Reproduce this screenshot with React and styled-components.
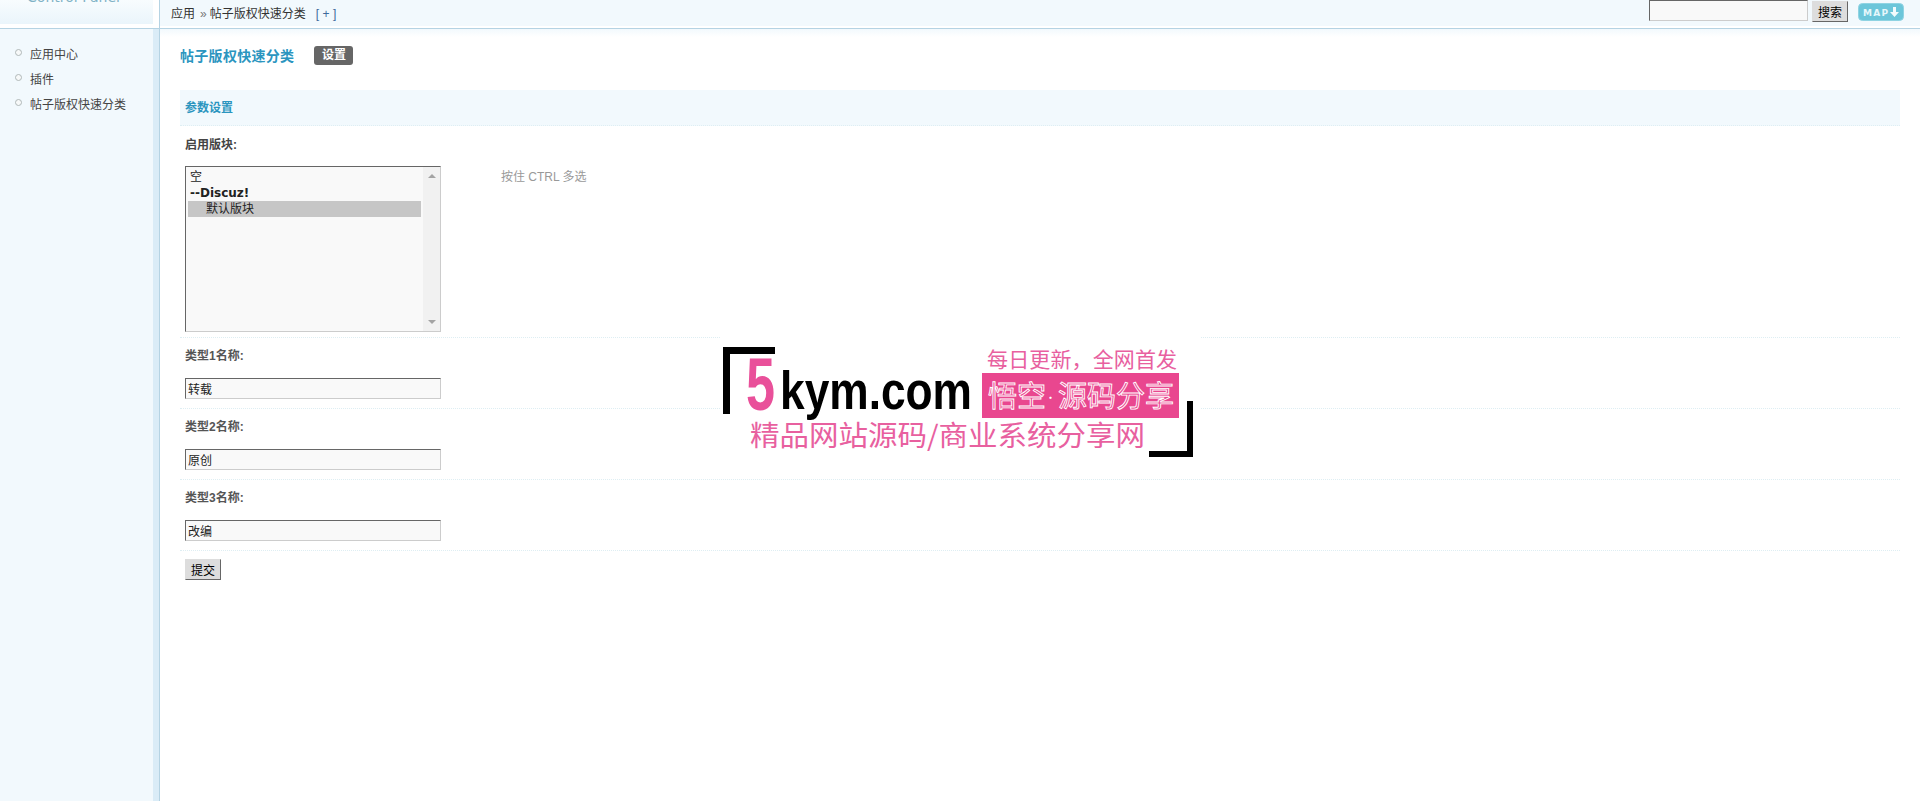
import React from "react";
import styled, { createGlobalStyle } from "styled-components";

const GlobalStyle = createGlobalStyle`
  html, body {
    margin: 0;
    padding: 0;
    background: #fff;
  }
  body {
    font: 12px/18px "Liberation Sans", "Noto Sans CJK SC", sans-serif;
    color: #333;
  }
`;

const menuItems = ["应用中心", "插件", "帖子版权快速分类"];

const fields = [
  { label: "类型1名称:", value: "转载" },
  { label: "类型2名称:", value: "原创" },
  { label: "类型3名称:", value: "改编" },
];

const MapIcon = () => (
  <svg width="46" height="18" viewBox="0 0 46 18">
    <rect x="0.5" y="0.5" width="45" height="17" rx="4" fill="#6cc6da" stroke="#8fd3e2" />
    <text
      x="5"
      y="13"
      fontFamily="'DejaVu Sans', sans-serif"
      fontWeight="700"
      fontSize="9"
      textLength="25"
      fill="#e6f7fb"
    >
      MAP
    </text>
    <path d="M35 4h3v5h3l-4.500 5-4.500-5h3z" fill="#f2fbfd" />
  </svg>
);

const Watermark = () => (
  <svg width="480" height="125" viewBox="0 0 480 125">
    <path d="M3 12h52v7H10v60H3z" fill="#000" />
    <path d="M473 66v56h-44v-6h38V66z" fill="#000" />
    <text
      x="26"
      y="75"
      fontFamily="'Liberation Sans', sans-serif"
      fontWeight="700"
      fontSize="75"
      textLength="29"
      lengthAdjust="spacingAndGlyphs"
      fill="#e9509a"
    >
      5
    </text>
    <text
      x="60"
      y="74"
      fontFamily="'Liberation Sans', sans-serif"
      fontWeight="700"
      fontSize="54"
      textLength="192"
      lengthAdjust="spacingAndGlyphs"
      fill="#000"
    >
      kym.com
    </text>
    <text
      x="267"
      y="32"
      fontFamily="'Noto Sans CJK SC', sans-serif"
      fontSize="21"
      textLength="190"
      fill="#e8609f"
    >
      每日更新，全网首发
    </text>
    <rect x="262" y="38" width="197" height="45" fill="#e9478f" />
    <text
      x="268"
      y="72"
      fontFamily="'Noto Sans CJK SC', sans-serif"
      fontSize="29"
      fill="#e9478f"
      stroke="#fff"
      strokeWidth="0.9"
    >
      悟空
    </text>
    <text
      x="326"
      y="66"
      fontFamily="'Noto Sans CJK SC', sans-serif"
      fontSize="9"
      fontWeight="700"
      fill="#fff"
    >
      ·
    </text>
    <text
      x="338"
      y="72"
      fontFamily="'Noto Sans CJK SC', sans-serif"
      fontSize="29"
      fill="#e9478f"
      stroke="#fff"
      strokeWidth="0.9"
    >
      源码分享
    </text>
    <text
      x="30"
      y="111"
      fontFamily="'Noto Sans CJK SC', sans-serif"
      fontSize="28"
      textLength="395"
      lengthAdjust="spacingAndGlyphs"
      fill="#e8609f"
    >
      精品网站源码/商业系统分享网
    </text>
  </svg>
);

const App = () => {
  return (
    <Page>
      <GlobalStyle />
      <Header>
        <LogoBox>
          <LogoText>Control Panel</LogoText>
        </LogoBox>
        <HeaderGap />
        <HeaderBar>
          <Crumbs>
            应用<CrumbSep>»</CrumbSep>帖子版权快速分类<AddLink>[+]</AddLink>
          </Crumbs>
          <SearchArea>
            <Field $width="159px" $height="21px" />
            <PlainButton>搜索</PlainButton>
            <MapLink>
              <MapIcon />
            </MapLink>
          </SearchArea>
        </HeaderBar>
      </Header>

      <Body>
        <Sidebar>
          <Menu>
            {menuItems.map((item) => (
              <MenuItem key={item}>{item}</MenuItem>
            ))}
          </Menu>
        </Sidebar>
        <SideStrip />
        <Main>
          <TitleRow>
            <Title>帖子版权快速分类</Title>
            <Tab>设置</Tab>
          </TitleRow>

          <SectionHead>参数设置</SectionHead>

          <LabelRow>启用版块:</LabelRow>
          <SelectRow>
            <ListBox>
              <ListItems>
                <ListItem>空</ListItem>
                <ListItem $bold>--Discuz!</ListItem>
                <ListItem $selected>默认版块</ListItem>
              </ListItems>
              <ScrollTrack>
                <ArrowUp />
                <ArrowDown />
              </ScrollTrack>
            </ListBox>
            <Hint>按住 CTRL 多选</Hint>
          </SelectRow>

          {fields.map((field) => (
            <FieldRow key={field.label}>
              <FieldLabel>{field.label}</FieldLabel>
              <Field $width="256px" $height="21px" defaultValue={field.value} />
            </FieldRow>
          ))}

          <SubmitRow>
            <PlainButton>提交</PlainButton>
          </SubmitRow>
        </Main>
      </Body>

      <WatermarkBox>
        <Watermark />
      </WatermarkBox>
    </Page>
  );
};

const Page = styled.div`
  position: relative;
  display: flex;
  flex-direction: column;
  height: 801px;
  overflow: hidden;
`;

const Header = styled.div`
  display: flex;
  height: 28px;
  flex: none;
  border-bottom: 1px solid #b5d3e3;
  background: #fff;
`;

const LogoBox = styled.div`
  width: 153px;
  height: 24px;
  overflow: hidden;
  background: linear-gradient(#f8fcfe, #eaf5fb);
  text-align: center;
`;

const LogoText = styled.div`
  margin-top: -12px;
  padding-right: 6px;
  font: 14px/18px "DejaVu Sans", sans-serif;
  color: #7fb2c6;
`;

const HeaderGap = styled.div`
  width: 7px;
  flex: none;
  border-right: 1px solid #b5d3e3;
  box-sizing: border-box;
`;

const HeaderBar = styled.div`
  flex: 1;
  display: flex;
  align-items: flex-start;
  justify-content: space-between;
  height: 26px;
  padding-left: 11px;
  padding-right: 16px;
  background: #f2f9fd;
`;

const Crumbs = styled.div`
  line-height: 28px;
  color: #333;
`;

const CrumbSep = styled.span`
  margin: 0 3px 0 5px;
  color: #777;
`;

const AddLink = styled.span`
  margin-left: 10px;
  color: #3d6a9c;
  letter-spacing: 3.5px;
`;

const SearchArea = styled.div`
  display: flex;
  align-items: flex-start;
`;

const MapLink = styled.a`
  display: block;
  margin: 3px 0 0 10px;
  height: 18px;
`;

const Field = styled.input`
  display: block;
  box-sizing: border-box;
  width: ${(props) => props.$width};
  height: ${(props) => props.$height};
  padding: 0 2px;
  border: 1px solid;
  border-color: #666 #ccc #ccc #666;
  background: #f9f9f9;
  font: 12px "Noto Sans CJK SC", sans-serif;
  color: #222;
  outline: none;
`;

const PlainButton = styled.button`
  display: block;
  box-sizing: border-box;
  width: 36px;
  height: 21px;
  margin: 1px 0 0 4px;
  padding: 0;
  border: 1px solid;
  border-color: #ddd #666 #666 #ddd;
  background: #ddd;
  font: 12px/19px "Noto Sans CJK SC", sans-serif;
  color: #000;
`;

const Body = styled.div`
  flex: 1;
  display: flex;
  min-height: 0;
`;

const Sidebar = styled.div`
  width: 153px;
  flex: none;
  background: #f2f9fd;
`;

const Menu = styled.ul`
  list-style: none;
  margin: 0;
  padding: 14px 0 0;
`;

const MenuItem = styled.li`
  position: relative;
  height: 25px;
  padding-left: 30px;
  line-height: 24px;
  color: #444;

  &::before {
    content: "";
    position: absolute;
    left: 15px;
    top: 6px;
    width: 5px;
    height: 5px;
    border: 1px solid #b0b8b8;
    border-radius: 50%;
    background: #f7f9f9;
  }
`;

const SideStrip = styled.div`
  width: 6px;
  flex: none;
  background: #daecf7;
  border-right: 1px solid #b5d3e3;
`;

const Main = styled.div`
  flex: 1;
  min-width: 0;
  padding: 0 20px;
  background: linear-gradient(#f2f9fd, #fff 8px);
`;

const TitleRow = styled.div`
  display: flex;
  align-items: center;
  height: 61px;
  padding-top: 18px;
  padding-bottom: 26px;
  box-sizing: border-box;
`;

const Title = styled.h1`
  margin: 0;
  font-size: 14px;
  font-weight: 700;
  line-height: 20px;
  letter-spacing: 0.3px;
  color: #2b95bf;
`;

const Tab = styled.span`
  margin-left: 20px;
  width: 39px;
  height: 19px;
  border-radius: 3px;
  background: #666;
  font-weight: 700;
  line-height: 19px;
  text-align: center;
  color: #fff;
`;

const SectionHead = styled.div`
  height: 35px;
  padding-left: 5px;
  border-bottom: 1px dotted #deeef3;
  background: #f2f9fd;
  font-weight: 700;
  line-height: 37px;
  color: #2b95bf;
`;

const LabelRow = styled.div`
  height: 30px;
  padding: 10px 5px 0;
  line-height: 18px;
  font-weight: 700;
  color: #444;
`;

const SelectRow = styled.div`
  display: flex;
  height: 172px;
  padding: 0 5px;
  box-sizing: border-box;
  border-bottom: 1px dotted #deeef3;
`;

const ListBox = styled.div`
  display: flex;
  box-sizing: border-box;
  width: 256px;
  height: 166px;
  border: 1px solid;
  border-color: #666 #ccc #ccc #666;
  background: #f9f9f9;
`;

const ListItems = styled.div`
  flex: 1;
  padding: 2px 0 2px 2px;
`;

const ListItem = styled.div`
  height: 16px;
  padding-left: ${(props) => (props.$selected ? "18px" : "2px")};
  margin-right: 2px;
  background: ${(props) => (props.$selected ? "#c6c6c6" : "transparent")};
  font: ${(props) => (props.$bold ? 700 : 400)} 12px/16px "DejaVu Sans", "Noto Sans CJK SC", sans-serif;
  color: #222;
`;

const ScrollTrack = styled.div`
  position: relative;
  width: 17px;
  background: #f1f1f1;
`;

const ArrowUp = styled.div`
  position: absolute;
  top: 7px;
  left: 5px;
  border: 4px solid transparent;
  border-top: 0;
  border-bottom: 4px solid #a3a3a3;
`;

const ArrowDown = styled.div`
  position: absolute;
  bottom: 7px;
  left: 5px;
  border: 4px solid transparent;
  border-bottom: 0;
  border-top: 4px solid #a3a3a3;
`;

const Hint = styled.div`
  margin: 2px 0 0 60px;
  line-height: 18px;
  color: #999;
`;

const FieldRow = styled.div`
  box-sizing: border-box;
  height: 71px;
  padding: 9px 5px 0;
  border-bottom: 1px dotted #deeef3;
`;

const FieldLabel = styled.div`
  height: 31px;
  line-height: 18px;
  font-weight: 700;
  color: #555;
`;

const SubmitRow = styled.div`
  padding: 7px 5px 0;
  margin-left: -4px;
`;

const WatermarkBox = styled.div`
  position: absolute;
  left: 720px;
  top: 335px;
  width: 480px;
  height: 125px;
  background: #fff;
`;

export default App;
